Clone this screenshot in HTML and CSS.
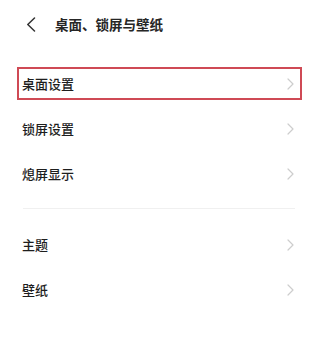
FILE: index.html
```html
<!DOCTYPE html>
<html lang="zh">
<head>
<meta charset="utf-8">
<link rel="stylesheet" href="styles.css">
</head>
<body>
<div class="page">
  <header class="header">
    <svg class="back" width="10" height="15" viewBox="0 0 10 15"><polyline points="8.5,1 1.8,7.5 8.5,14" fill="none" stroke="#333" stroke-width="1.5" stroke-linecap="round" stroke-linejoin="round"/></svg>
    <span class="title">桌面、锁屏与壁纸</span>
  </header>
  <div class="group first">
    <div class="row marked"><span class="label">桌面设置</span><svg class="chev" width="7" height="12" viewBox="0 0 7 12"><polyline points="1,1 6,6 1,11" fill="none" stroke="#cdcdcd" stroke-width="1.2" stroke-linecap="round" stroke-linejoin="round"/></svg></div>
    <div class="row"><span class="label">锁屏设置</span><svg class="chev" width="7" height="12" viewBox="0 0 7 12"><polyline points="1,1 6,6 1,11" fill="none" stroke="#cdcdcd" stroke-width="1.2" stroke-linecap="round" stroke-linejoin="round"/></svg></div>
    <div class="row"><span class="label">熄屏显示</span><svg class="chev" width="7" height="12" viewBox="0 0 7 12"><polyline points="1,1 6,6 1,11" fill="none" stroke="#cdcdcd" stroke-width="1.2" stroke-linecap="round" stroke-linejoin="round"/></svg></div>
  </div>
  <div class="divider"></div>
  <div class="group">
    <div class="row"><span class="label">主题</span><svg class="chev" width="7" height="12" viewBox="0 0 7 12"><polyline points="1,1 6,6 1,11" fill="none" stroke="#cdcdcd" stroke-width="1.2" stroke-linecap="round" stroke-linejoin="round"/></svg></div>
    <div class="row"><span class="label">壁纸</span><svg class="chev" width="7" height="12" viewBox="0 0 7 12"><polyline points="1,1 6,6 1,11" fill="none" stroke="#cdcdcd" stroke-width="1.2" stroke-linecap="round" stroke-linejoin="round"/></svg></div>
  </div>
</div>
</body>
</html>
```
FILE: styles.css
```css
html, body {
  margin: 0;
  padding: 0;
  background: #fff;
}
.page {
  width: 310px;
  height: 343px;
  font-family: "Noto Sans CJK SC", "Noto Sans", sans-serif;
  color: #222;
  overflow: hidden;
}
.header {
  height: 48px;
  display: flex;
  align-items: center;
  padding-left: 26px;
  gap: 19px;
}
.back {
  display: block;
}
.title {
  font-size: 13.5px;
  font-weight: bold;
  color: #262626;
}
.group.first {
  margin-top: 13px;
}
.row {
  position: relative;
  height: 45px;
  display: flex;
  align-items: center;
  justify-content: space-between;
  padding: 0 16px 0 22px;
}
.label {
  font-size: 13px;
  font-weight: 500;
  color: #1e1e1e;
}
.chev {
  display: block;
}
.marked::after {
  content: "";
  position: absolute;
  left: 17px;
  top: 6px;
  width: 285px;
  height: 33px;
  box-sizing: border-box;
  border: 2px solid #cf4a55;
}
.divider {
  height: 1px;
  background: #f0f0f0;
  margin: 12px 15px 13px 23px;
}
```
